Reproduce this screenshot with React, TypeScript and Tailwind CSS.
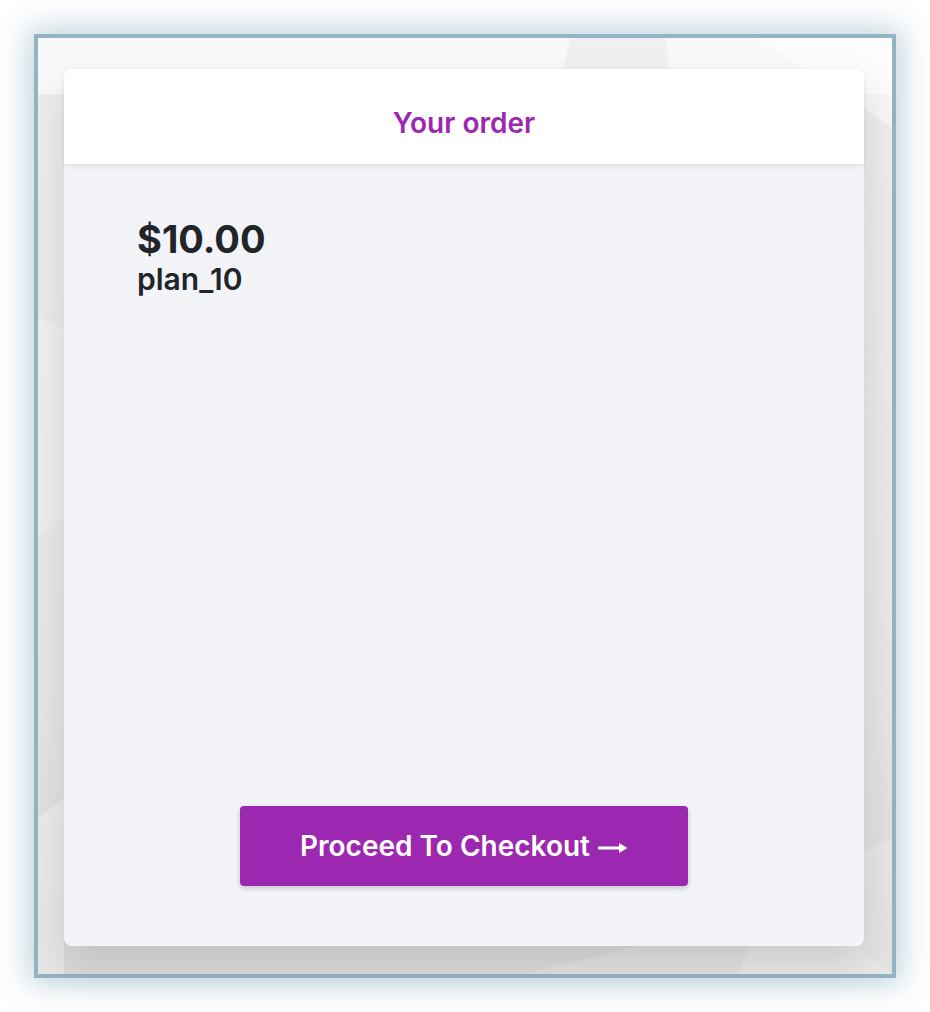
import { useState } from "react";

// 注文内容（ダミー）
const ORDER = { price: "$10.00", plan: "plan_10" };

// 背景のうっすらした多角形パターン
function BackdropShapes() {
  return (
    <svg
      className="pointer-events-none absolute inset-0 h-full w-full"
      viewBox="0 0 854 936"
      preserveAspectRatio="none"
    >
      <polygon points="532,0 628,0 634,56 519,56" fill="#000" opacity="0.035" />
      <polygon points="720,0 854,0 854,90" fill="#fff" opacity="0.5" />
      <polygon points="0,280 26,290 26,480 0,500" fill="#fff" opacity="0.25" />
      <polygon points="0,780 26,760 26,936 0,936" fill="#fff" opacity="0.3" />
      <polygon points="486,936 600,908 820,908 854,936" fill="#fff" opacity="0.18" />
      <polygon points="700,936 730,860 854,800 854,936" fill="#fff" opacity="0.22" />
    </svg>
  );
}

// 細長い右矢印（先端は塗りつぶし）
function LongArrow() {
  return (
    <svg width="30" height="12" viewBox="0 0 30 12" className="mt-[3px]">
      <rect x="0" y="4.5" width="23" height="3" fill="white" />
      <polygon points="21,1 29.5,6 21,11" fill="white" />
    </svg>
  );
}

export default function App() {
  const [loading, setLoading] = useState(false);

  return (
    <div className="min-h-screen bg-white p-[34px] font-['Inter','Noto_Sans',sans-serif] text-[#212529]">
      <div className="relative h-[944px] w-[862px] border-4 border-[#94b3c3] bg-[linear-gradient(to_bottom,#f8f9fa_0px,#f8f9fa_56px,#ededed_56px,#e6e6e6_70%,#dadada_100%)] shadow-[0_0_28px_6px_rgba(120,160,185,0.45)]">
        <BackdropShapes />

        {/* 注文カード */}
        <div className="relative ml-[26px] mt-[31px] flex h-[877px] w-[800px] flex-col rounded-lg shadow-[0_18px_40px_rgba(0,0,0,0.12)]">
          <header className="relative z-10 h-[95px] rounded-t-lg bg-white pt-[38px] text-center shadow-[0_2px_4px_rgba(0,0,0,0.08)]">
            <h1 className="text-[28px] leading-8 font-semibold text-[#9c27b0]">Your order</h1>
          </header>

          <div className="flex flex-1 flex-col rounded-b-lg bg-[#f3f4f8] px-[73px] pt-[55px] pb-[60px]">
            <div className="text-[38px] leading-10 font-bold">{ORDER.price}</div>
            <div className="mt-1 text-[30px] leading-8 font-semibold">{ORDER.plan}</div>

            <button
              onClick={() => setLoading(!loading)}
              className="mx-auto mt-auto flex h-20 w-[448px] items-center justify-center gap-2 rounded bg-[#9c27b0] text-[28px] font-semibold text-white shadow-[0_2px_5px_rgba(0,0,0,0.2)]"
            >
              Proceed To Checkout
              <LongArrow />
            </button>
          </div>
        </div>
      </div>
    </div>
  );
}
